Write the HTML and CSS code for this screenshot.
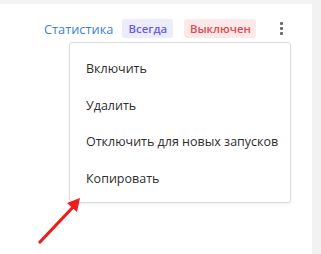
FILE: index.html
```html
<!DOCTYPE html>
<html lang="ru">
<head>
<meta charset="utf-8">
<link rel="stylesheet" href="styles.css">
</head>
<body>
<div class="card">
  <div class="header">
    <a class="stat">Статистика</a>
    <span class="badge badge-always">Всегда</span>
    <span class="badge badge-off">Выключен</span>
    <span class="kebab"><i></i><i></i><i></i></span>
  </div>
  <ul class="menu">
    <li>Включить</li>
    <li>Удалить</li>
    <li>Отключить для новых запусков</li>
    <li>Копировать</li>
  </ul>
  <svg class="arrow" width="60" height="60" viewBox="0 0 60 60">
    <line x1="2" y1="55" x2="37" y2="18" stroke="#ee1c1c" stroke-width="3.2" stroke-linecap="round"/>
    <polygon points="42,11 39,25 29,16" fill="#ee1c1c"/>
  </svg>
</div>
</body>
</html>
```
FILE: styles.css
```css
html, body {
  margin: 0;
  padding: 0;
}
body {
  background: #f2f2f2;
  font-family: "Open Sans", "Noto Sans", sans-serif;
  width: 321px;
  height: 254px;
  overflow: hidden;
}
.card {
  position: relative;
  margin-top: 4px;
  width: 312px;
  height: 250px;
  background: #fff;
}
.header {
  display: flex;
  align-items: center;
  padding: 15px 0 0 44px;
  height: 19px;
}
.stat {
  color: #3d7fd9;
  font-size: 12.8px;
  margin-right: 9px;
}
.badge {
  height: 19px;
  line-height: 19px;
  border-radius: 3px;
  font-size: 11.4px;
  font-weight: 600;
  text-align: center;
  white-space: nowrap;
  box-sizing: border-box;
}
.badge-always {
  background: #ececfc;
  color: #6b5de3;
  width: 51px;
  margin-right: 11px;
}
.badge-off {
  background: #fde9e9;
  color: #e24b4b;
  width: 72px;
}
.kebab {
  display: flex;
  flex-direction: column;
  gap: 2px;
  margin-left: 24px;
}
.kebab i {
  width: 3px;
  height: 3px;
  background: #6a6a6a;
  border-radius: 1px;
}
.menu {
  position: absolute;
  left: 69px;
  top: 38px;
  width: 222px;
  height: 161px;
  margin: 0;
  padding: 8px 0 0 0;
  list-style: none;
  box-sizing: border-box;
  border: 1px solid #dcdcdc;
  border-radius: 3px;
  background: #fff;
  box-shadow: 0 1px 3px rgba(0,0,0,0.08);
}
.menu li {
  height: 36.7px;
  line-height: 36.7px;
  padding-left: 16px;
  font-size: 12.5px;
  color: #2e2e2e;
}
.arrow {
  position: absolute;
  left: 38px;
  top: 183px;
}
```
